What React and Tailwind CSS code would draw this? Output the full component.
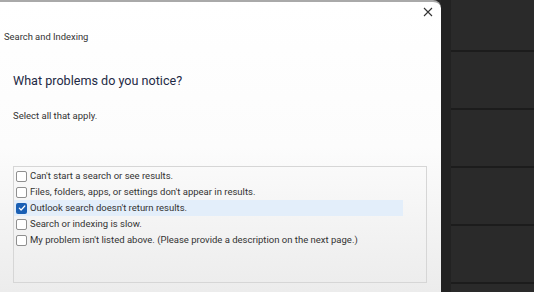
const items = [
  { label: "Can't start a search or see results.", checked: false },
  { label: "Files, folders, apps, or settings don't appear in results.", checked: false },
  { label: "Outlook search doesn't return results.", checked: true, hover: true },
  { label: "Search or indexing is slow.", checked: false },
  { label: "My problem isn't listed above. (Please provide a description on the next page.)", checked: false },
];

function Checkbox({ checked }) {
  if (checked) {
    return (
      <span className="flex h-[11px] w-[11px] shrink-0 items-center justify-center rounded-[2px] bg-[#1a5fb4]">
        <svg width="8" height="8" viewBox="0 0 8 8" fill="none">
          <path d="M1.3 4.2 L3.1 6 L6.8 2" stroke="white" strokeWidth="1.2" strokeLinecap="round" strokeLinejoin="round" />
        </svg>
      </span>
    );
  }
  return <span className="h-[11px] w-[11px] shrink-0 rounded-[2px] border border-[#8f8f8f] bg-white" />;
}

export default function App() {
  return (
    <div
      className="flex h-[292px] w-[534px] overflow-hidden bg-[#262626]"
      style={{ fontFamily: 'Roboto, "Noto Sans", sans-serif' }}
    >
      <div className="flex w-[441px] shrink-0 flex-col rounded-tr-[8px] border-t-2 border-[#a9a9a9] bg-gradient-to-b from-white via-[#fcfcfc] to-[#ececec]">
        <div className="flex h-[22px] justify-end pr-[8px] pt-[5px]">
          <svg width="10" height="10" viewBox="0 0 10 10">
            <path d="M1 1 L9 9 M9 1 L1 9" stroke="#333" strokeWidth="1.1" />
          </svg>
        </div>
        <div className="mt-[6px] pl-[4px] text-[9.4px] leading-[14px] text-[#333]">Search and Indexing</div>
        <div className="mt-[27px] pl-[13px] text-[12.6px] leading-[20px] text-[#1e2a45]">What problems do you notice?</div>
        <div className="mt-[18px] pl-[13px] text-[9.5px] leading-[14px] text-[#333]">Select all that apply.</div>
        <div className="ml-[13px] mt-[43px] h-[117px] w-[414px] border border-[#d6d6d6] pt-[1px]">
          {items.map((it) => (
            <div
              key={it.label}
              className={`flex h-[16px] w-[389px] items-center gap-[3px] pl-[2px] text-[9.5px] text-[#333] ${it.hover ? "bg-[#e3eefa]" : ""}`}
            >
              <Checkbox checked={it.checked} />
              <span className="whitespace-nowrap">{it.label}</span>
            </div>
          ))}
        </div>
      </div>
      <div className="flex flex-1 flex-col border-l-[10px] border-[#222]">
        <div className="h-[50px] bg-[#2a2a2a]" />
        <div className="h-[2px] bg-[#1c1c1c]" />
        <div className="h-[56px] bg-[#2a2a2a]" />
        <div className="h-[2px] bg-[#1c1c1c]" />
        <div className="h-[56px] bg-[#2a2a2a]" />
        <div className="h-[2px] bg-[#1c1c1c]" />
        <div className="h-[56px] bg-[#2a2a2a]" />
        <div className="h-[2px] bg-[#1c1c1c]" />
        <div className="h-[56px] bg-[#2a2a2a]" />
        <div className="h-[2px] bg-[#1c1c1c]" />
        <div className="flex-1 bg-[#2a2a2a]" />
      </div>
    </div>
  );
}
